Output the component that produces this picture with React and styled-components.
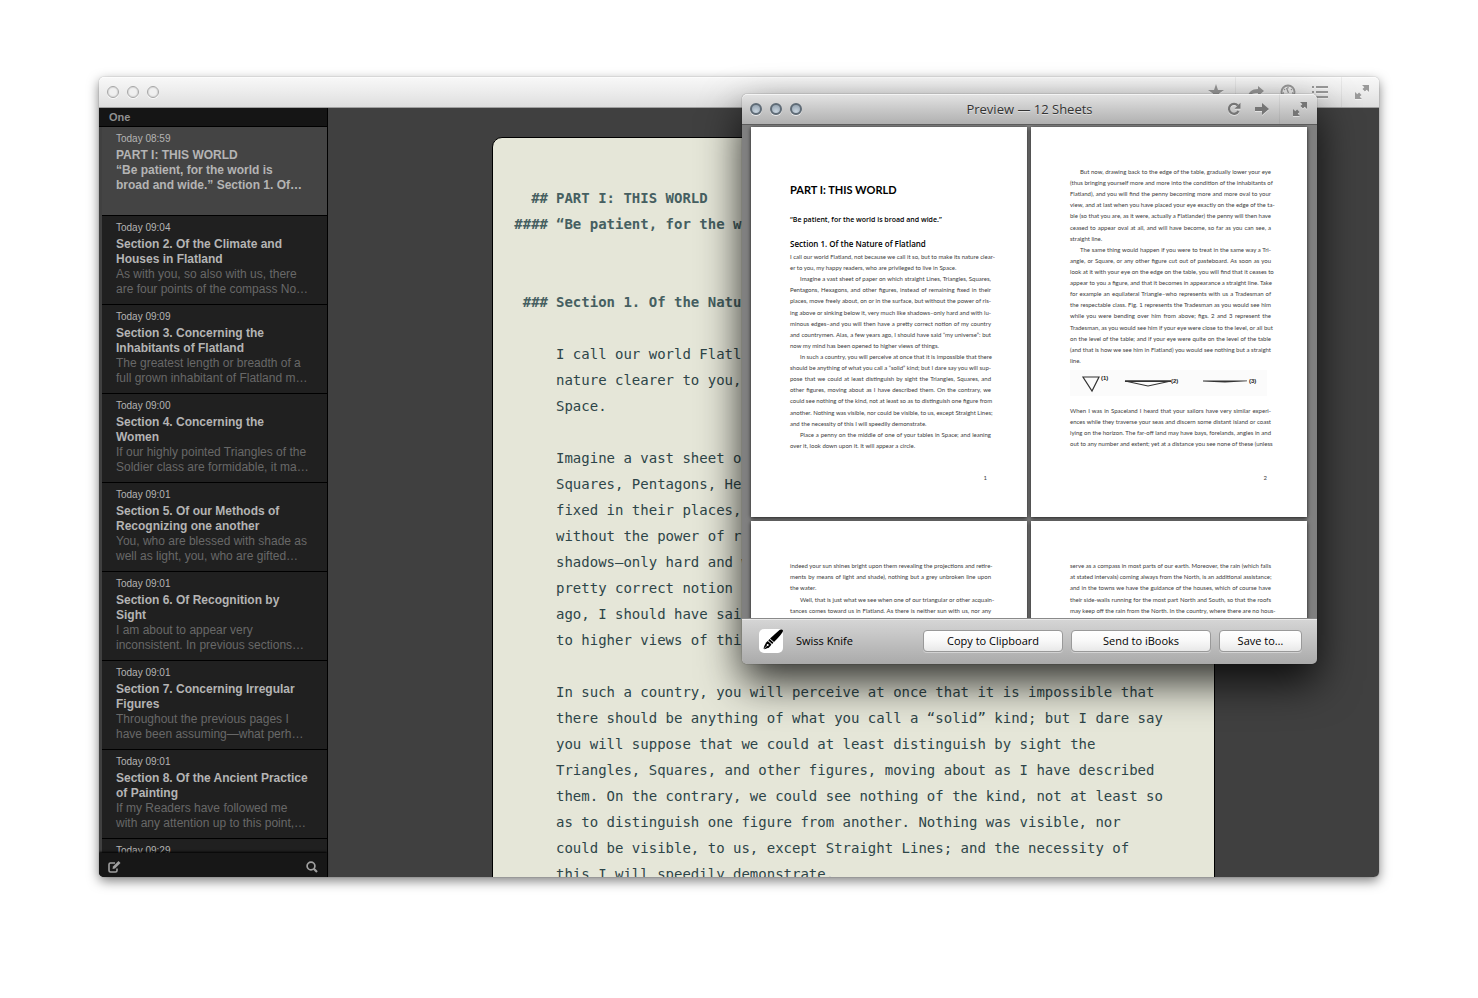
import React from "react";
import styled, { createGlobalStyle } from "styled-components";

const Global = createGlobalStyle`
  * { box-sizing: border-box; }
  body { margin: 0; background: #fff; font-family: "Liberation Sans", Arial, sans-serif; }
  h1, h2, h3, p, ul { margin: 0; padding: 0; font-weight: normal; }
  button { font: inherit; color: inherit; border: 0; padding: 0; background: none; }
`;

const Desktop = styled.div`
  display: flex;
  height: 100vh;
  padding: 77px 99px 121px;
`;

const AppWindow = styled.div`
  position: relative;
  flex: 1;
  min-width: 0;
  display: flex;
  flex-direction: column;
  border-radius: 5px;
  box-shadow: 0 0 1px rgba(0, 0, 0, 0.5), 0 4px 12px rgba(0, 0, 0, 0.5);
`;

const TitleBar = styled.header`
  flex: none;
  display: grid;
  grid-template-columns: 1fr auto 1fr;
  align-items: center;
  height: 31px;
  padding: 0 1px;
  border-radius: 5px 5px 0 0;
  border-bottom: 1px solid ${(p) => (p.$active ? "#5c5c5c" : "#a0a0a0")};
  background: ${(p) =>
    p.$active
      ? "linear-gradient(#e4e4e4, #c9c9c9 50%, #b0b0b0)"
      : "linear-gradient(#f8f8f8, #ececec 50%, #dedede)"};
  box-shadow: inset 0 1px 0 rgba(255, 255, 255, 0.6);
`;

const Lights = styled.div`
  display: flex;
  gap: 8px;
  margin-left: 7px;
`;

const Light = styled.button`
  width: 12px;
  height: 12px;
  border-radius: 50%;
  border: ${(p) => (p.$active ? "2px solid #5f6b76" : "1px solid #a6a6a6")};
  background: ${(p) =>
    p.$active ? "radial-gradient(circle at 50% 80%, #c9d5df, #8f9eac)" : "#f0f0f0"};
  box-shadow: 0 1px 0 rgba(255, 255, 255, 0.7),
    inset 0 0 1px 1px ${(p) => (p.$active ? "transparent" : "rgba(0, 0, 0, 0.1)")};
`;

const WindowTitle = styled.h2`
  font: 13px/18px "Open Sans", "Noto Sans", sans-serif;
  color: #333;
  text-shadow: 0 1px 0 rgba(255, 255, 255, 0.5);
`;

const Tools = styled.div`
  grid-column: 3;
  justify-self: end;
  display: flex;
  align-items: center;
  height: 30px;
`;

const ToolButton = styled.button`
  display: flex;
  align-items: center;
  justify-content: center;
  width: ${(p) => (p.$compact ? "28px" : "32px")};
  height: 30px;
  color: ${(p) => (p.$active ? "#757575" : "#9a9a9a")};
  svg { filter: drop-shadow(0 1px 0 rgba(255, 255, 255, 0.5)); }
`;

const Divider = styled.span`
  width: 1px;
  height: 30px;
  margin-left: ${(p) => (p.$gap || 3)}px;
  margin-right: 4px;
  background: rgba(0, 0, 0, 0.05);
`;

const Workspace = styled.div`
  flex: 1;
  min-height: 0;
  display: flex;
  overflow: hidden;
  border-radius: 0 0 5px 5px;
  background: #404040;
`;

const Sidebar = styled.aside`
  flex: none;
  width: 229px;
  display: flex;
  flex-direction: column;
  border-right: 1px solid #000;
  background: #202020;
`;

const GroupName = styled.h2`
  flex: none;
  height: 19px;
  padding-left: 10px;
  border-bottom: 1px solid #000;
  background: #151515;
  color: #909090;
  font-size: 11px;
  font-weight: bold;
  line-height: 18px;
`;

const SheetList = styled.ul`
  position: relative;
  flex: 1;
  min-height: 0;
  overflow: hidden;
  list-style: none;
  border-left: 3px solid #404040;
`;

const ScrollThumb = styled.span`
  position: absolute;
  left: -3px;
  top: 7px;
  width: 3px;
  height: 82px;
  background: #2a2a2a;
`;

const SheetItem = styled.li`
  height: 89px;
  padding: 4px 14px 0;
  border-bottom: 1px solid #000;
  background: ${(p) => (p.$selected ? "#444" : "#202020")};
  color: #b4b4b4;
  font-size: 12px;
  line-height: 15px;
  white-space: pre-line;
`;

const SheetDate = styled.time`
  display: block;
  margin-bottom: 2px;
  font-size: 10px;
`;

const SheetTitle = styled.h3`
  font-size: 12px;
  font-weight: bold;
  white-space: pre;
`;

const SheetExcerpt = styled.p`
  color: #686868;
  white-space: pre;
`;

const SidebarFooter = styled.footer`
  flex: none;
  display: flex;
  align-items: center;
  justify-content: space-between;
  height: 24px;
  padding: 3px 9px 0;
  background: #171717;
  box-shadow: 0 -1px 2px #000;
  z-index: 1;
  color: #a0a0a0;
`;

const IconButton = styled.button`
  display: flex;
`;

const Editor = styled.main`
  flex: 1;
  min-width: 0;
  padding-top: 29px;
`;

const Paper = styled.article`
  max-width: 723px;
  min-height: 100%;
  margin: 0 auto;
  padding-top: 47px;
  border: 1px solid #000;
  border-radius: 10px 10px 0 0;
  background: #e5e6d8;
  color: #2d4548;
  font: 14px/26px "DejaVu Sans Mono", "Liberation Mono", monospace;
`;

const Block = styled.div`
  display: grid;
  grid-template-columns: 55px 1fr;
  column-gap: 8px;
  margin-bottom: ${(p) => p.$after || 0}px;
`;

const Marker = styled.span`
  text-align: right;
  font-weight: bold;
  color: #465f61;
`;

const EditorHeading = styled.h1`
  font-size: 14px;
  font-weight: bold;
  color: #465f61;
  white-space: pre;
`;

const EditorText = styled.p`
  grid-column: 2;
  white-space: pre;
`;

const PreviewWindow = styled.section`
  position: absolute;
  top: 17px;
  right: 62px;
  width: 575px;
  height: 570px;
  display: flex;
  flex-direction: column;
  border-radius: 5px;
  box-shadow: 0 0 1px rgba(0, 0, 0, 0.8), 0 18px 42px rgba(0, 0, 0, 0.8);
`;

const PreviewPane = styled.div`
  flex: 1;
  min-height: 0;
  overflow: hidden;
  display: grid;
  grid-template-columns: repeat(2, minmax(0, 1fr));
  grid-auto-rows: 390px;
  gap: 4px;
  padding: 2px 10px 0 9px;
  background: #808080;
`;

const Page = styled.article`
  display: flex;
  flex-direction: column;
  padding: ${(p) => (p.$opening ? "55px" : "39px")} 36px 34px 39px;
  background: #fff;
  box-shadow: 0 1px 4px rgba(0, 0, 0, 0.8);
  color: #3c3c3c;
  font: 6px/11px Lato, "Open Sans", sans-serif;
`;

const PageTitle = styled.h1`
  color: #000;
  font-size: 11px;
  font-weight: bold;
  line-height: 16px;
`;

const PageQuote = styled.h3`
  margin-top: 17px;
  color: #000;
  font-family: "Open Sans", sans-serif;
  font-size: 7px;
  font-weight: 600;
  line-height: 10px;
  white-space: nowrap;
`;

const PageSection = styled.h2`
  margin: 13px 0 1px;
  color: #000;
  font-family: "Open Sans", sans-serif;
  font-size: 8px;
  font-weight: 600;
  line-height: 12px;
  white-space: nowrap;
`;

const Copy = styled.div`
  display: grid;
  grid-template-columns: minmax(0, 1fr);
  grid-auto-rows: 1fr;
  height: ${(p) => p.$height}px;
`;

const Line = styled.span`
  display: block;
  white-space: nowrap;
  text-indent: ${(p) => (p.$indent ? "10px" : "0")};
  text-align: justify;
  text-align-last: ${(p) => (p.$last ? "left" : "justify")};
`;

const Figure = styled.svg`
  display: block;
  width: 197px;
  height: 26px;
  margin: 4px 0 9px;
`;

const PageNumber = styled.span`
  margin-top: auto;
  padding-right: 4px;
  text-align: right;
  line-height: 10px;
`;

const PreviewFooter = styled.footer`
  flex: none;
  display: flex;
  align-items: center;
  gap: 8px;
  height: 46px;
  padding: 0 15px 2px 17px;
  border-top: 1px solid #8a8a8a;
  border-radius: 0 0 5px 5px;
  background: linear-gradient(#d6d6d6, #aaa);
  box-shadow: inset 0 1px 0 rgba(255, 255, 255, 0.5);
  color: #000;
  font: 11px/14px "Open Sans", "Noto Sans", sans-serif;
`;

const StyleName = styled.span`
  margin-left: 5px;
  margin-right: auto;
`;

const PushButton = styled.button`
  height: 22px;
  width: ${(p) => (p.$wide ? "140px" : "83px")};
  border: 1px solid #999;
  border-radius: 4px;
  background: linear-gradient(#fff, #f8f8f8 50%, #e8e8e8);
  box-shadow: 0 1px 0 rgba(255, 255, 255, 0.4);
`;

const ExpandIcon = () => (
  <svg width="16" height="16" viewBox="0 0 16 16" fill="currentColor">
    <path d="M8 1h7v7l-2.300-2.300-1.800 1.800-2.400-2.400 1.800-1.800z" />
    <path d="M8 15H1V8l2.300 2.300 1.800-1.800 2.400 2.400-1.800 1.800z" />
  </svg>
);
const StarIcon = () => (
  <svg width="16" height="16" viewBox="0 0 16 16" fill="currentColor">
    <path d="M8 0l2 6h6l-5 3.600 2 6-5-3.700-5 3.700 2-6L0 6h6z" />
  </svg>
);
const ShareIcon = () => (
  <svg width="16" height="16" viewBox="0 0 16 16" fill="currentColor">
    <path d="M10 2l6 5-6 5V9C5 9 2 10 0 14 0 8 4 5 10 5z" />
  </svg>
);
const GaugeIcon = () => (
  <svg width="16" height="16" viewBox="0 0 16 16" fill="none" stroke="currentColor">
    <circle cx="8" cy="8" r="6.500" strokeWidth="2" />
    <path d="M6.500 4l2 5M8 2.500v2M4 5l1 1M12 5l-1 1M3 9h1M12 9h1" strokeWidth="1.300" />
  </svg>
);
const ListIcon = () => (
  <svg width="16" height="14" viewBox="0 0 16 14" fill="currentColor">
    <path d="M0 1h2v2H0zM4 1h12v2H4zM0 6h2v2H0zM4 6h12v2H4zM0 11h2v2H0zM4 11h12v2H4z" />
  </svg>
);
const RefreshIcon = () => (
  <svg width="14" height="14" viewBox="0 0 14 14">
    <path d="M10.800 3.500A5 5 0 1 0 11.500 9" fill="none" stroke="currentColor" strokeWidth="2.200" />
    <path d="M13.500 0.800v6H7.500z" fill="currentColor" />
  </svg>
);
const ArrowIcon = () => (
  <svg width="14" height="14" viewBox="0 0 14 14" fill="currentColor">
    <path d="M0 5h7V1l7 6-7 6V9H0z" />
  </svg>
);
const ComposeIcon = () => (
  <svg width="13" height="12" viewBox="0 0 13 12" fill="none" stroke="currentColor">
    <path d="M7 2H2.500Q1 2 1 3.500v6Q1 11 2.500 11h5Q9 11 9 9.500V7.500" strokeWidth="1.600" />
    <path d="M4.500 8l.5-2.500L10.500 0l2 2L7 7.500z" fill="currentColor" stroke="none" />
  </svg>
);
const SearchIcon = () => (
  <svg width="12" height="12" viewBox="0 0 12 12" fill="none" stroke="currentColor">
    <circle cx="5" cy="5" r="3.900" strokeWidth="1.700" />
    <path d="M7.800 7.800l3.200 3.200" strokeWidth="2.200" />
  </svg>
);
const PenIcon = () => (
  <svg width="24" height="24" viewBox="0 0 24 24">
    <rect width="24" height="24" rx="5" fill="#fff" />
    <path d="M20.500 1Q23 0 24 1.500 24.500 3.500 15 13L11 9.500Z" />
    <path d="M10.400 10.100l4 3.500-1.100 1.300-4-3.500z" />
    <path d="M8.700 12l3.700 3.200Q11.500 18.500 5.500 20.200L4.500 19.500Q6 14 8.700 12z" />
    <circle cx="8.700" cy="16" r="1" fill="#fff" />
    <path d="M8.500 16.200l-3.500 3.600" stroke="#fff" strokeWidth=".6" />
  </svg>
);

const sheets = [
  ["Today 08:59", "PART I: THIS WORLD\n“Be patient, for the world is\nbroad and wide.” Section 1. Of…", ""],
  ["Today 09:04", "Section 2. Of the Climate and\nHouses in Flatland", "As with you, so also with us, there\nare four points of the compass No…"],
  ["Today 09:09", "Section 3. Concerning the\nInhabitants of Flatland", "The greatest length or breadth of a\nfull grown inhabitant of Flatland m…"],
  ["Today 09:00", "Section 4. Concerning the\nWomen", "If our highly pointed Triangles of the\nSoldier class are formidable, it ma…"],
  ["Today 09:01", "Section 5. Of our Methods of\nRecognizing one another", "You, who are blessed with shade as\nwell as light, you, who are gifted…"],
  ["Today 09:01", "Section 6. Of Recognition by\nSight", "I am about to appear very\ninconsistent. In previous sections…"],
  ["Today 09:01", "Section 7. Concerning Irregular\nFigures", "Throughout the previous pages I\nhave been assuming—what perh…"],
  ["Today 09:01", "Section 8. Of the Ancient Practice\nof Painting", "If my Readers have followed me\nwith any attention up to this point,…"],
  ["Today 09:29", "", ""],
];

const paragraphs = [
  "I call our world Flatland, not because we call it so, but to make its\nnature clearer to you, my happy readers, who are privileged to live in\nSpace.",
  "Imagine a vast sheet of paper on which straight Lines, Triangles,\nSquares, Pentagons, Hexagons, and other figures, instead of remaining\nfixed in their places, move freely about, on or in the surface, but\nwithout the power of rising above or sinking below it, very much like\nshadows—only hard and with luminous edges—and you will then have a\npretty correct notion of my country and countrymen. Alas, a few years\nago, I should have said “my universe”: but now my mind has been opened\nto higher views of things.",
  "In such a country, you will perceive at once that it is impossible that\nthere should be anything of what you call a “solid” kind; but I dare say\nyou will suppose that we could at least distinguish by sight the\nTriangles, Squares, and other figures, moving about as I have described\nthem. On the contrary, we could see nothing of the kind, not at least so\nas to distinguish one figure from another. Nothing was visible, nor\ncould be visible, to us, except Straight Lines; and the necessity of\nthis I will speedily demonstrate.",
];

/* Leading ">" indents the first line of a paragraph, trailing "|" ends one. */
const page1 = [
  "I call our world Flatland, not because we call it so, but to make its nature clear-",
  "er to you, my happy readers, who are privileged to live in Space.|",
  ">Imagine a vast sheet of paper on which straight Lines, Triangles, Squares,",
  "Pentagons, Hexagons, and other figures, instead of remaining fixed in their",
  "places, move freely about, on or in the surface, but without the power of ris-",
  "ing above or sinking below it, very much like shadows–only hard and with lu-",
  "minous edges–and you will then have a pretty correct notion of my country",
  "and countrymen. Alas, a few years ago, I should have said “my universe”: but",
  "now my mind has been opened to higher views of things.|",
  ">In such a country, you will perceive at once that it is impossible that there",
  "should be anything of what you call a “solid” kind; but I dare say you will sup-",
  "pose that we could at least distinguish by sight the Triangles, Squares, and",
  "other figures, moving about as I have described them. On the contrary, we",
  "could see nothing of the kind, not at least so as to distinguish one figure from",
  "another. Nothing was visible, nor could be visible, to us, except Straight Lines;",
  "and the necessity of this I will speedily demonstrate.|",
  ">Place a penny on the middle of one of your tables in Space; and leaning",
  "over it, look down upon it. It will appear a circle.|",
];
const page2 = [
  ">But now, drawing back to the edge of the table, gradually lower your eye",
  "(thus bringing yourself more and more into the condition of the inhabitants of",
  "Flatland), and you will find the penny becoming more and more oval to your",
  "view, and at last when you have placed your eye exactly on the edge of the ta-",
  "ble (so that you are, as it were, actually a Flatlander) the penny will then have",
  "ceased to appear oval at all, and will have become, so far as you can see, a",
  "straight line.|",
  ">The same thing would happen if you were to treat in the same way a Tri-",
  "angle, or Square, or any other figure cut out of pasteboard. As soon as you",
  "look at it with your eye on the edge on the table, you will find that it ceases to",
  "appear to you a figure, and that it becomes in appearance a straight line. Take",
  "for example an equilateral Triangle–who represents with us a Tradesman of",
  "the respectable class. Fig. 1 represents the Tradesman as you would see him",
  "while you were bending over him from above; figs. 2 and 3 represent the",
  "Tradesman, as you would see him if your eye were close to the level, or all but",
  "on the level of the table; and if your eye were quite on the level of the table",
  "(and that is how we see him in Flatland) you would see nothing but a straight",
  "line.|",
];
const page2b = [
  "When I was in Spaceland I heard that your sailors have very similar experi-",
  "ences while they traverse your seas and discern some distant island or coast",
  "lying on the horizon. The far-off land may have bays, forelands, angles in and",
  "out to any number and extent; yet at a distance you see none of these (unless",
];
const page3 = [
  "indeed your sun shines bright upon them revealing the projections and retire-",
  "ments by means of light and shade), nothing but a grey unbroken line upon",
  "the water.|",
  ">Well, that is just what we see when one of our triangular or other acquain-",
  "tances comes toward us in Flatland. As there is neither sun with us, nor any",
];
const page4 = [
  "serve as a compass in most parts of our earth. Moreover, the rain (which falls",
  "at stated intervals) coming always from the North, is an additional assistance;",
  "and in the towns we have the guidance of the houses, which of course have",
  "their side-walls running for the most part North and South, so that the roofs",
  "may keep off the rain from the North. In the country, where there are no hous-",
];

const PageCopy = ({ lines, height }) => (
  <Copy $height={height}>
    {lines.map((l) => (
      <Line key={l} $indent={l.startsWith(">")} $last={l.endsWith("|")}>
        {l.replace(/^>|\|$/g, "")}
      </Line>
    ))}
  </Copy>
);

const WindowLights = ({ active }) => (
  <Lights>
    {["Close", "Minimize", "Zoom"].map((n) => (
      <Light key={n} aria-label={n} $active={active} />
    ))}
  </Lights>
);

const Tool = ({ label, icon: Icon, ...rest }) => (
  <ToolButton aria-label={label} {...rest}>
    <Icon />
  </ToolButton>
);

export default function App() {
  return (
    <>
      <Global />
      <Desktop>
        <AppWindow>
          <TitleBar>
            <WindowLights />
            <Tools>
              <Tool label="Favorites" icon={StarIcon} />
              <Divider />
              <Tool label="Share" icon={ShareIcon} />
              <Tool label="Statistics" icon={GaugeIcon} />
              <Tool label="Outline" icon={ListIcon} />
              <Divider $gap={5} />
              <Tool label="Full screen" icon={ExpandIcon} />
            </Tools>
          </TitleBar>
          <Workspace>
            <Sidebar>
              <GroupName>One</GroupName>
              <SheetList>
                {sheets.map(([date, title, excerpt], i) => (
                  <SheetItem key={i} $selected={i === 0}>
                    <SheetDate>{date}</SheetDate>
                    <SheetTitle>{title}</SheetTitle>
                    <SheetExcerpt>{excerpt}</SheetExcerpt>
                  </SheetItem>
                ))}
                <ScrollThumb />
              </SheetList>
              <SidebarFooter>
                <IconButton aria-label="New sheet"><ComposeIcon /></IconButton>
                <IconButton aria-label="Search"><SearchIcon /></IconButton>
              </SidebarFooter>
            </Sidebar>
            <Editor>
              <Paper>
                <Block>
                  <Marker>##</Marker>
                  <EditorHeading>PART I: THIS WORLD</EditorHeading>
                </Block>
                <Block $after={52}>
                  <Marker>####</Marker>
                  <EditorHeading as="h3">“Be patient, for the world is broad and wide.”</EditorHeading>
                </Block>
                <Block $after={26}>
                  <Marker>###</Marker>
                  <EditorHeading as="h2">Section 1. Of the Nature of Flatland</EditorHeading>
                </Block>
                {paragraphs.map((p) => (
                  <Block key={p} $after={26}>
                    <EditorText>{p}</EditorText>
                  </Block>
                ))}
              </Paper>
            </Editor>
          </Workspace>

          <PreviewWindow>
            <TitleBar $active>
              <WindowLights active />
              <WindowTitle>Preview — 12 Sheets</WindowTitle>
              <Tools>
                <Tool label="Reload" icon={RefreshIcon} $active $compact />
                <Tool label="Next" icon={ArrowIcon} $active $compact />
                <Divider />
                <Tool label="Full screen" icon={ExpandIcon} $active />
              </Tools>
            </TitleBar>
            <PreviewPane>
              <Page $opening>
                <PageTitle>PART I: THIS WORLD</PageTitle>
                <PageQuote>“Be patient, for the world is broad and wide.”</PageQuote>
                <PageSection>Section 1. Of the Nature of Flatland</PageSection>
                <PageCopy lines={page1} height={200} />
                <PageNumber>1</PageNumber>
              </Page>
              <Page>
                <PageCopy lines={page2} height={200} />
                <Figure viewBox="0 0 197 26">
                  <rect width="197" height="26" fill="#fbfbfb" />
                  <g fill="none" stroke="#333" strokeWidth="1.200">
                    <path d="M13 7h16l-7 14z" />
                    <path d="M55 11h46l-23 5z" />
                  </g>
                  <path d="M55 10.500h46v1.500H55zM133 10.500h44v.8l-22 1.200-22-1z" fill="#333" />
                  <g fill="#222" fontSize="6" fontWeight="bold" fontFamily="Liberation Sans, sans-serif">
                    <text x="31" y="10">(1)</text>
                    <text x="101" y="13">(2)</text>
                    <text x="179" y="13">(3)</text>
                  </g>
                </Figure>
                <PageCopy lines={page2b} height={44} />
                <PageNumber>2</PageNumber>
              </Page>
              <Page>
                <PageCopy lines={page3} height={56} />
              </Page>
              <Page>
                <PageCopy lines={page4} height={56} />
              </Page>
            </PreviewPane>
            <PreviewFooter>
              <PenIcon />
              <StyleName>Swiss Knife</StyleName>
              <PushButton $wide>Copy to Clipboard</PushButton>
              <PushButton $wide>Send to iBooks</PushButton>
              <PushButton>Save to…</PushButton>
            </PreviewFooter>
          </PreviewWindow>
        </AppWindow>
      </Desktop>
    </>
  );
}
